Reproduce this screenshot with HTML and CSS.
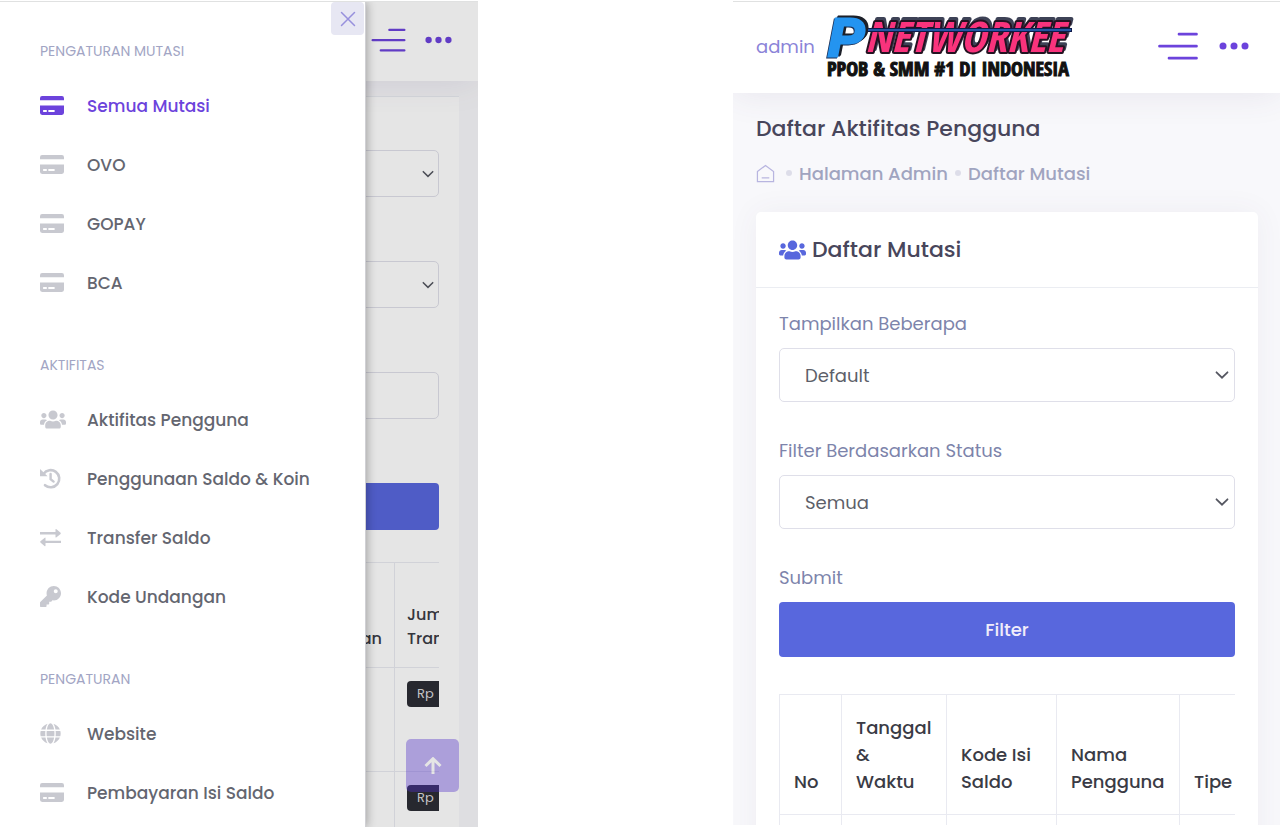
FILE: index.html
```html
<!DOCTYPE html>
<html lang="id">
<head>
<meta charset="utf-8">
<meta name="viewport" content="width=device-width, initial-scale=1">
<title>Daftar Mutasi</title>
<link rel="stylesheet" href="styles.css">
</head>
<body>
<svg class="sprite" aria-hidden="true">
  <symbol id="card" viewBox="0 0 23 18"><path fill-rule="evenodd" d="M0 4V2Q0 0 2 0H21Q23 0 23 2V4ZM0 9H23V16Q23 18 21 18H2Q0 18 0 16ZM3 13.300V15.300H6.500V13.300ZM8 13.300V15.300H14V13.300Z"/></symbol>
  <symbol id="users" viewBox="0 0 640 512"><path d="M96 224c35.300 0 64-28.700 64-64s-28.700-64-64-64-64 28.700-64 64 28.700 64 64 64zm448 0c35.300 0 64-28.700 64-64s-28.700-64-64-64-64 28.700-64 64 28.700 64 64 64zm32 32h-64c-17.600 0-33.500 7.100-45.100 18.600 40.300 22.100 68.900 62 75.100 109.400h66c17.700 0 32-14.300 32-32v-32c0-35.300-28.700-64-64-64zm-256 0c61.900 0 112-50.100 112-112S381.900 32 320 32 208 82.100 208 144s50.100 112 112 112zm76.800 32h-8.300c-20.800 10-43.900 16-68.500 16s-47.600-6-68.500-16h-8.300C179.600 288 128 339.600 128 403.200V432c0 26.500 21.500 48 48 48h288c26.500 0 48-21.500 48-48v-28.800c0-63.600-51.600-115.200-115.200-115.200zm-223.700-13.400C161.500 263.100 145.600 256 128 256H64c-35.300 0-64 28.700-64 64v32c0 17.700 14.300 32 32 32h65.900c6.300-47.400 34.900-87.300 75.200-109.400z"/></symbol>
  <symbol id="history" viewBox="0 0 21 21"><path d="M3.600 5.800A8.600 8.600 0 1 1 5 17.200" fill="none" stroke="currentColor" stroke-width="2.600" stroke-linecap="round"/><path d="M0 1V8.300H7.600Z"/><path d="M10.600 6V11.200L13.600 13.600" fill="none" stroke="currentColor" stroke-width="2.400" stroke-linecap="round"/></symbol>
  <symbol id="exchange" viewBox="0 0 21 18"><path d="M0 3.600H15.500V1.200Q15.500 0 16.500 .8L20.600 4.200Q21 4.800 20.600 5.400L16.500 8.800Q15.500 9.500 15.500 8.400V6H0ZM21 12.200H5.500V9.800Q5.500 8.600 4.500 9.400L.4 12.800Q0 13.400 .4 14L4.500 17.400Q5.500 18.100 5.500 17V14.600H21Z"/></symbol>
  <symbol id="key" viewBox="0 0 512 512"><path d="M512 176C512 273.200 433.200 352 336 352c-11.200 0-22.200-1-32.800-3l-24 27A24 24 0 0 1 261.200 384H224v40c0 13.300-10.700 24-24 24h-40v40c0 13.300-10.700 24-24 24H24c-13.300 0-24-10.700-24-24v-78c0-6.400 2.500-12.500 7-17l161.800-161.800C163.100 213.800 160 195.300 160 176 160 78.800 238.800 0 336 0 433.500 0 512 78.500 512 176zM336 128c0 26.500 21.500 48 48 48s48-21.500 48-48-21.500-48-48-48-48 21.500-48 48z"/></symbol>
  <symbol id="globe" viewBox="0 0 496 512"><path d="M336.500 160C322 70.700 287.800 8 248 8s-74 62.700-88.500 152h177zM152 256c0 22.200 1.200 43.500 3.300 64h185.300c2.100-20.500 3.300-41.800 3.300-64s-1.200-43.500-3.300-64H155.300c-2.100 20.500-3.300 41.800-3.300 64zm324.700-96c-28.600-67.900-86.500-120.400-158-141.600 24.400 33.800 41.200 84.700 50 141.600h108zM177.200 18.400C105.800 39.600 47.800 92.100 19.300 160h108c8.700-56.900 25.500-107.800 49.900-141.600zM487.400 192H372.700c2.100 21 3.300 42.500 3.300 64s-1.200 43-3.300 64h114.600c5.500-20.500 8.600-41.800 8.600-64s-3.100-43.500-8.500-64zM120 256c0-21.500 1.200-43 3.300-64H8.600C3.200 212.500 0 233.800 0 256s3.200 43.500 8.600 64h114.600c-2-21-3.200-42.500-3.200-64zm39.500 96c14.500 89.300 48.700 152 88.500 152s74-62.700 88.500-152h-177zm159.300 141.600c71.400-21.200 129.400-73.700 158-141.600h-108c-8.800 56.900-25.600 107.800-50 141.600zM19.300 352c28.600 67.900 86.500 120.400 158 141.600-24.400-33.800-41.200-84.700-50-141.600h-108z"/></symbol>
  <symbol id="menu" viewBox="0 0 40 28"><path d="M21 2.200H38.500M1.500 14.200H38.500M11 26.200H38.500" fill="none" stroke="currentColor" stroke-width="2.700" stroke-linecap="round"/></symbol>
  <symbol id="dots" viewBox="0 0 30 8"><circle cx="4" cy="4" r="3.500"/><circle cx="15" cy="4" r="3.500"/><circle cx="26" cy="4" r="3.500"/></symbol>
  <symbol id="chevron" viewBox="0 0 14 8"><path d="M1.500 1.300L7 6.700L12.500 1.300" fill="none" stroke="currentColor" stroke-width="1.800" stroke-linecap="round"/></symbol>
</svg>

<main class="board">
  <section class="phone phone-menu">
    <div class="screen">
      <header class="topbar topbar-small">
        <button class="icon-button" aria-label="Menu"><svg class="menu-small"><use href="#menu"/></svg></button>
        <button class="icon-button" aria-label="Lainnya"><svg class="dots-small"><use href="#dots"/></svg></button>
      </header>
      <div class="sheet">
        <div class="sheet-body">
          <div class="select-wrap"><select class="control control-small" aria-label="Tampilkan"><option></option></select><svg class="chevron chevron-small"><use href="#chevron"/></svg></div>
          <div class="select-wrap"><select class="control control-small" aria-label="Status"><option></option></select><svg class="chevron chevron-small"><use href="#chevron"/></svg></div>
          <input class="control control-small" type="text" aria-label="Cari">
          <button class="submit submit-small" aria-label="Filter"></button>
          <div class="table-clip">
            <table class="table table-small">
              <tr><th class="wide">an</th><th>Jumlah<br>Transfer</th></tr>
              <tr><td></td><td><span class="badge">Rp</span></td></tr>
              <tr><td></td><td><span class="badge">Rp</span></td></tr>
            </table>
          </div>
        </div>
      </div>
      <button class="to-top" aria-label="Ke atas"><svg class="to-top-icon" viewBox="0 0 18 18"><path d="M9 17V2M1.500 9L9 1.700L16.500 9" fill="none" stroke="currentColor" stroke-width="3"/></svg></button>
    </div>
    <div class="dim"></div>
    <aside class="drawer">
      <button class="close" aria-label="Tutup"><svg class="close-icon" viewBox="0 0 16 16"><path d="M1.500 1.500L14.500 14.500M14.500 1.500L1.500 14.500" fill="none" stroke="currentColor" stroke-width="1.500" stroke-linecap="round"/></svg></button>
      <nav>
        <h2 class="group">PENGATURAN MUTASI</h2>
        <a class="item active" href="#"><svg class="ico card"><use href="#card"/></svg>Semua Mutasi</a>
        <a class="item" href="#"><svg class="ico card"><use href="#card"/></svg>OVO</a>
        <a class="item" href="#"><svg class="ico card"><use href="#card"/></svg>GOPAY</a>
        <a class="item" href="#"><svg class="ico card"><use href="#card"/></svg>BCA</a>
        <h2 class="group">AKTIFITAS</h2>
        <a class="item" href="#"><svg class="ico users"><use href="#users"/></svg>Aktifitas Pengguna</a>
        <a class="item" href="#"><svg class="ico"><use href="#history"/></svg>Penggunaan Saldo &amp; Koin</a>
        <a class="item" href="#"><svg class="ico"><use href="#exchange"/></svg>Transfer Saldo</a>
        <a class="item" href="#"><svg class="ico"><use href="#key"/></svg>Kode Undangan</a>
        <h2 class="group">PENGATURAN</h2>
        <a class="item" href="#"><svg class="ico"><use href="#globe"/></svg>Website</a>
        <a class="item" href="#"><svg class="ico card"><use href="#card"/></svg>Pembayaran Isi Saldo</a>
      </nav>
    </aside>
  </section>

  <section class="phone phone-list">
    <header class="topbar">
      <a class="user" href="#">admin</a>
      <svg class="logo" viewBox="0 0 252 66" role="img" aria-label="PNETWORKEE">
        <text class="logo-word" x="43" y="39">NETWORKEE</text>
        <text class="logo-p" x="6" y="43">P</text>
        <path d="M46 17H250" stroke="#101a4a" stroke-width="4"/>
        <path d="M46 17H249" stroke="#2a6cc0" stroke-width="1.500"/>
        <text class="tagline" x="126" y="63" text-anchor="middle">PPOB &amp; SMM #1 DI INDONESIA</text>
      </svg>
      <span class="spacer"></span>
      <button class="icon-button" aria-label="Menu"><svg class="menu"><use href="#menu"/></svg></button>
      <button class="icon-button" aria-label="Lainnya"><svg class="dots"><use href="#dots"/></svg></button>
    </header>
    <div class="content">
      <h1 class="title">Daftar Aktifitas Pengguna</h1>
      <nav class="crumbs">
        <a class="crumb" href="#" aria-label="Beranda"><svg class="home" viewBox="0 0 20 20"><path d="M1.500 8L10 1.500L18.500 8V18.500H1.500ZM6 14.500H14" fill="none" stroke="currentColor" stroke-width="1.300"/></svg></a>
        <span class="dot"></span>
        <a class="crumb" href="#">Halaman Admin</a>
        <span class="dot"></span>
        <a class="crumb" href="#">Daftar Mutasi</a>
      </nav>
      <div class="panel">
        <h2 class="panel-head"><svg class="panel-icon"><use href="#users"/></svg>Daftar Mutasi</h2>
        <div class="panel-body">
          <form class="form">
            <div class="field">
              <label class="label" for="show">Tampilkan Beberapa</label>
              <div class="select-wrap"><select class="control" id="show"><option>Default</option></select><svg class="chevron"><use href="#chevron"/></svg></div>
            </div>
            <div class="field">
              <label class="label" for="status">Filter Berdasarkan Status</label>
              <div class="select-wrap"><select class="control" id="status"><option>Semua</option></select><svg class="chevron"><use href="#chevron"/></svg></div>
            </div>
            <div class="field">
              <label class="label" for="submit">Submit</label>
              <button class="submit" id="submit" type="button">Filter</button>
            </div>
          </form>
          <div class="table-clip">
            <table class="table">
              <colgroup><col class="c-no"><col class="c-date"><col class="c-code"><col class="c-name"><col class="c-type"></colgroup>
              <tr><th>No</th><th>Tanggal<br>&amp;<br>Waktu</th><th>Kode Isi<br>Saldo</th><th>Nama<br>Pengguna</th><th>Tipe</th></tr>
              <tr><td></td><td></td><td></td><td></td><td></td></tr>
            </table>
          </div>
        </div>
      </div>
    </div>
  </section>
</main>
</body>
</html>
```

FILE: styles.css
```css
* { box-sizing: border-box; }
body { margin: 0; background: #fff; color: #3f4047; font-family: Poppins, Inter, "Open Sans", sans-serif; }
h1, h2 { margin: 0; font-weight: 500; }
a { color: inherit; text-decoration: none; }
button { padding: 0; border: 0; font: inherit; cursor: pointer; }
svg { display: block; fill: currentColor; flex: none; }
.sprite { position: absolute; width: 0; height: 0; }

.board { display: grid; grid-template-columns: 478fr 255fr 547fr; height: 100vh; padding-top: 1px; overflow: hidden; }
.phone { min-width: 0; min-height: 0; overflow: hidden; border-top: 1px solid #e0e1e1; }
.phone-menu { position: relative; }
.phone-list { grid-column: 3; margin-bottom: 2px; background: #f8f8fb; }

.topbar { position: relative; display: flex; align-items: center; height: 91px; padding: 0 31px 3px 23px; background: #fff; box-shadow: 0 0 36px rgba(82, 63, 105, .11); }
.topbar-small { height: 79px; padding-right: 26px; justify-content: flex-end; gap: 19px; }
.icon-button { background: none; color: #6c43dc; }
.spacer { flex: 1; }
.menu { width: 40px; height: 28px; margin-right: 21px; }
.dots { width: 30px; height: 8px; }
.menu-small { width: 35px; height: 24px; }
.dots-small { width: 27px; height: 8px; }
.user { color: #8b83d8; font-size: 18px; font-weight: 400; }
.logo { width: 252px; height: 66px; margin-left: 7px; overflow: visible; }
.logo text { font-family: "Liberation Sans Narrow", "Open Sans Condensed", "DejaVu Sans Condensed", sans-serif; font-weight: 700; }
.logo .logo-word { font-size: 42px; font-style: italic; fill: #f9337c; stroke: #241322; stroke-width: 4; stroke-linejoin: round; paint-order: stroke; filter: drop-shadow(2px -3px 0 #3d4256); }
.logo .logo-p { font-family: "Liberation Sans", Arial, sans-serif; font-size: 54px; font-style: italic; fill: #2494f0; stroke: #2494f0; stroke-width: 3; filter: drop-shadow(3px -2px 0 #1c2029) drop-shadow(-1px 1px 0 #1c2f55); }
.logo .tagline { font-size: 20px; fill: #111; stroke: #111; stroke-width: 1; }

.screen { height: 100%; overflow: hidden; background: #f8f8fb; }
.sheet { margin: 0 19px 0 20px; background: #fff; }
.sheet-body { display: flex; flex-direction: column; gap: 64px; margin-top: 15px; padding: 53px 20px 20px; border-top: 1px solid #ebedf2; }
.sheet-body .table-clip { margin-top: -32px; }
.dim { position: absolute; inset: 0; background: rgba(0, 0, 0, .1); }
.to-top { position: absolute; right: 19px; top: 737px; display: grid; place-items: center; width: 53px; height: 53px; border-radius: 5px; background: #5d36e0; color: #fff; opacity: .38; }
.to-top-icon { width: 18px; height: 18px; }

.drawer { position: absolute; top: 0; bottom: 0; left: 0; width: 366px; padding-top: 39px; overflow: hidden; background: #fff; border-right: 1px solid #d0d0d4; box-shadow: 1px 0 9px rgba(0, 0, 0, .3); }
.close { position: absolute; top: 0; right: 1px; display: grid; place-items: center; width: 33px; height: 33px; border-radius: 4px; background: #e7e7f3; color: #9790dd; }
.close-icon { width: 16px; height: 16px; }
.group { margin: 43px 40px 15px; color: #a2a5c4; font-size: 14px; font-weight: 400; line-height: 20px; }
.group:first-child { margin-top: 0; }
.item { display: grid; grid-template-columns: 47px 1fr; align-items: center; height: 59px; padding-left: 40px; font-size: 17px; font-weight: 500; color: #646670; white-space: nowrap; }
.ico { width: 21px; height: 21px; color: #c8c9d0; }
.card { width: 24px; height: 19px; }
.users { width: 26px; }
.active, .active .ico { color: #6c43dc; }

.content { padding: 21px 22px 0 23px; }
.title { font-size: 22px; line-height: 30px; color: #48465b; }
.crumbs { display: flex; align-items: center; gap: 7px; height: 30px; margin-top: 14px; font-size: 18px; font-weight: 500; color: #a0a4c0; }
.home { width: 19px; height: 19px; margin-right: 4px; color: #b8b5e0; }
.dot { width: 6px; height: 6px; border-radius: 50%; background: #dddde9; }
.panel { margin-top: 24px; background: #fff; border-radius: 5px; box-shadow: 0 0 30px rgba(82, 63, 105, .06); }
.panel-head { display: flex; align-items: center; gap: 6px; height: 76px; padding: 0 23px; border-bottom: 1px solid #ebedf2; font-size: 22px; color: #48465b; }
.panel-icon { width: 27px; height: 22px; color: #5867dd; }
.panel-body { padding: 23px; }
.form { display: grid; gap: 36px; }
.field { display: grid; }
.label { height: 37px; font-size: 18px; line-height: 26px; color: #7d84ab; }
.select-wrap { position: relative; }
.control { display: block; width: 100%; height: 54px; padding: 0 25px; border: 1px solid #dfdfe9; border-radius: 5px; background: #fff; color: #5d5f69; font: inherit; font-size: 18px; appearance: none; }
.control-small { height: 47px; }
.chevron { position: absolute; top: 50%; right: 6px; width: 14px; height: 8px; margin-top: -4px; color: #555761; pointer-events: none; }
.chevron-small { right: 5px; width: 12px; }
.submit { width: 100%; height: 55px; border-radius: 4px; background: #5867dd; color: #f1ecfa; font-size: 18px; font-weight: 500; }
.submit-small { height: 47px; }

.table-clip { overflow: hidden; margin-top: 37px; }
.table { width: 520px; table-layout: fixed; border-collapse: collapse; }
.table th, .table td { padding: 19px 14px; border: 1px solid #e9eaf1; text-align: left; vertical-align: bottom; }
.table th { font-size: 18px; font-weight: 500; line-height: 27px; color: #3a3b45; white-space: nowrap; }
.c-no { width: 62px; }
.c-date { width: 105px; }
.c-code { width: 110px; }
.c-name { width: 123px; }
.table-small .wide { width: 354px; text-align: right; }
.table-small th { height: 105px; padding: 16px 12px; font-size: 16px; line-height: 24px; }
.table-small td { height: 104px; padding: 13px 12px; vertical-align: top; }
.badge { display: block; width: 80px; padding-left: 10px; border-radius: 4px; background: #2c2d35; color: #d8d8dd; font-size: 13px; line-height: 26px; }
```
